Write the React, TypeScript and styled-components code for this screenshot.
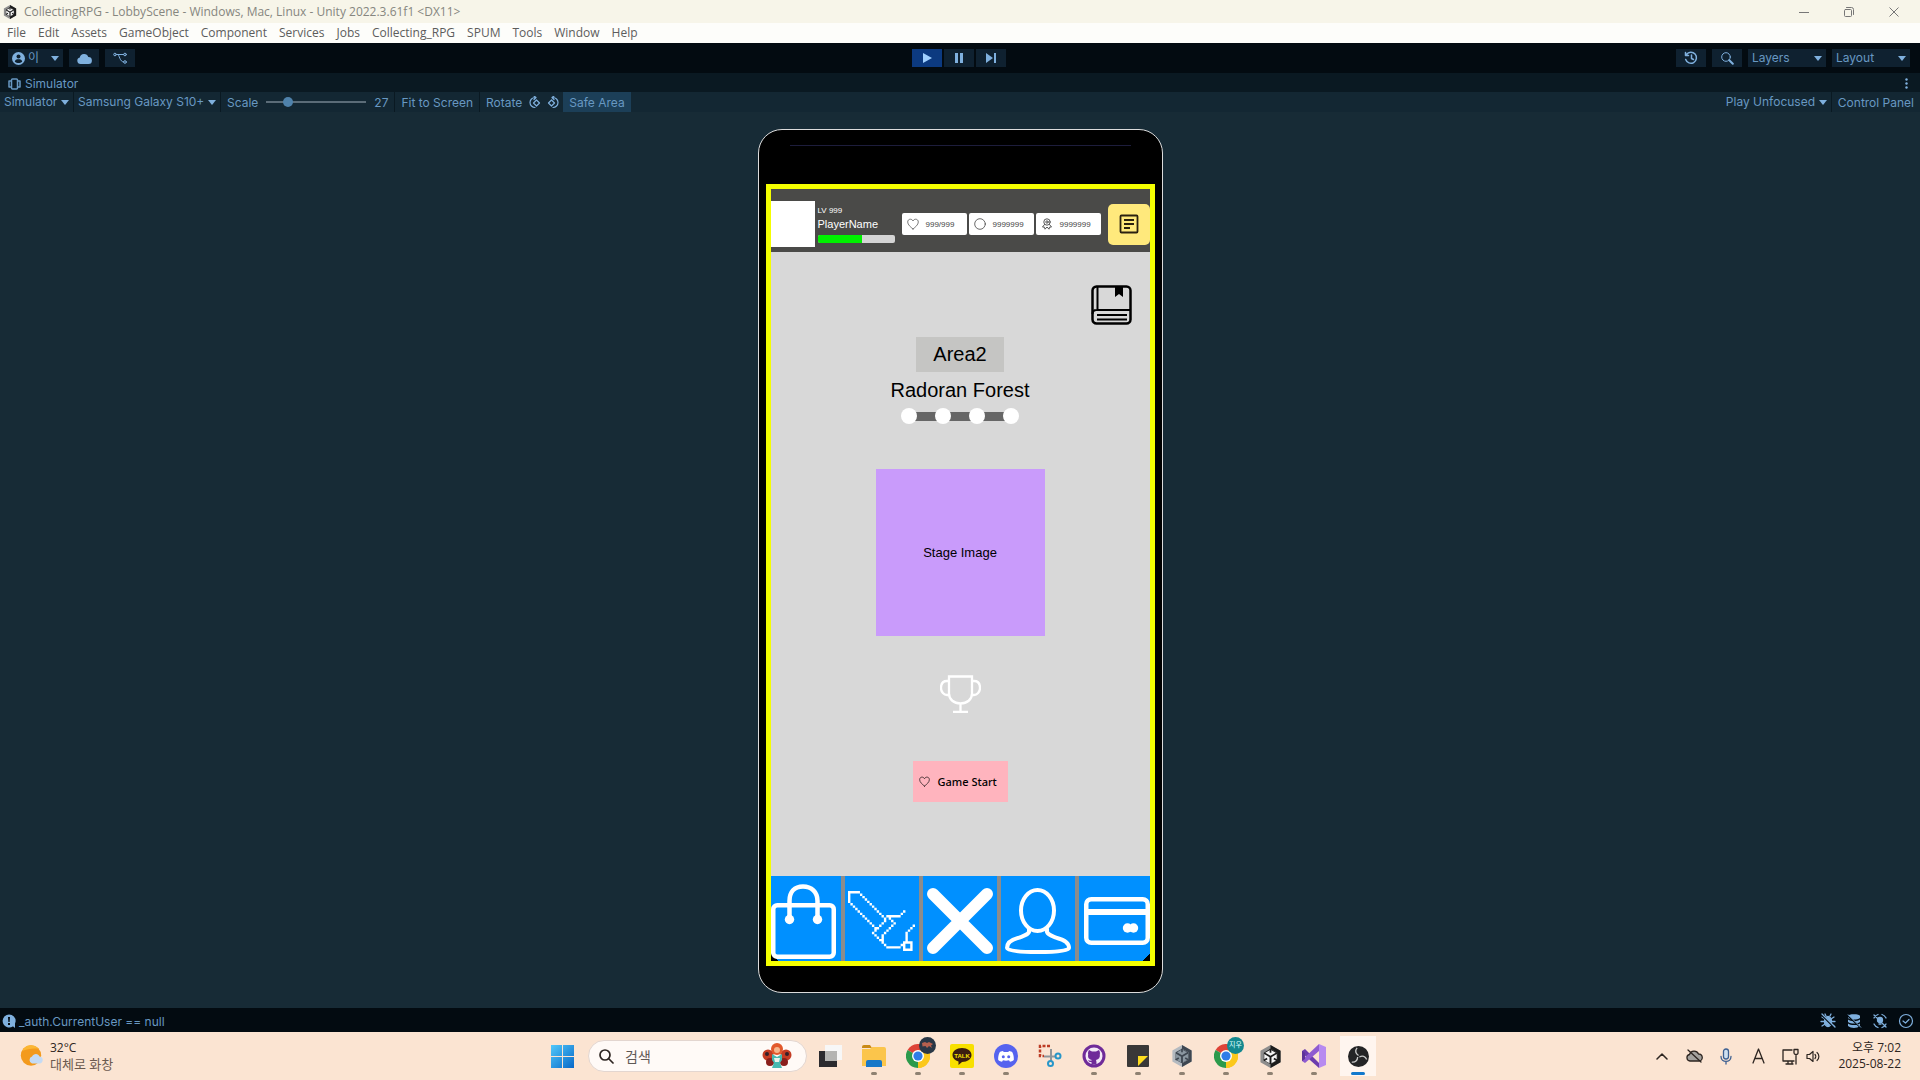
import React from 'react';
import styled, { createGlobalStyle } from 'styled-components';

const editorFont = `Inter, "Noto Sans CJK KR", sans-serif`;
const systemFont = `"Open Sans", "Noto Sans CJK KR", sans-serif`;
const gameFont = `"Liberation Sans", Arial, sans-serif`;

const c = {
  text: '#6898c2',
  icon: '#7fb0de',
  bar: '#030b11',
  tab: '#0a1922',
  tool: '#132733',
  canvas: '#172b36',
  control: '#0f2130',
};

const GlobalStyle = createGlobalStyle`
  * { box-sizing: border-box; }
  body { margin: 0; background: ${c.canvas}; }
  button, select, input { font: inherit; color: inherit; margin: 0; }
  button { border: 0; padding: 0; background: none; }
  svg { display: block; flex: none; }
`;

const Desktop = styled.div`
  min-height: 100vh;
  display: flex;
  flex-direction: column;
  font-family: ${editorFont};
  font-size: 12px;
  color: ${c.text};
`;

/* ---------- window chrome ---------- */
const TitleBar = styled.header`
  height: 23px;
  display: flex;
  align-items: center;
  padding: 0 16px 0 3px;
  gap: 7px;
  background: #f7f5e9;
  color: #86867f;
  font-family: ${systemFont};
`;
const WindowTitle = styled.h1`
  flex: 1;
  margin: 0;
  font-size: 12px;
  line-height: 20px;
  font-weight: 400;
`;
const WindowButtons = styled.div`
  display: flex;
  gap: 25px;
`;
const WindowButton = styled.button`
  width: 20px;
  height: 20px;
  display: grid;
  place-items: center;
`;
const MenuBar = styled.nav`
  height: 20px;
  display: flex;
  align-items: center;
  gap: 12px;
  padding: 0 7px;
  background: #fdfdfa;
  color: #5c5c5c;
  font-family: ${systemFont};
`;
const MenuItem = styled.button`
  font-size: 12px;
  line-height: 18px;
`;

/* ---------- editor toolbars ---------- */
const Toolbar = styled.div`
  height: 30px;
  display: grid;
  grid-template-columns: 1fr auto 1fr;
  align-items: center;
  padding: 0 10px 0 8px;
  background: ${c.bar};
`;
const ToolGroup = styled.div<{ $gap?: number; $end?: boolean }>`
  display: flex;
  align-items: center;
  gap: ${(p) => p.$gap ?? 6}px;
  justify-content: ${(p) => (p.$end ? 'flex-end' : 'flex-start')};
`;
const ToolButton = styled.button<{ $active?: boolean }>`
  width: 30px;
  height: 18px;
  display: grid;
  place-items: center;
  background: ${(p) => (p.$active ? '#0c3a80' : c.control)};
  color: ${c.icon};
`;
const SelectBox = styled.label<{ $width?: number; $bare?: boolean }>`
  height: ${(p) => (p.$bare ? 20 : 18)}px;
  width: ${(p) => (p.$width ? `${p.$width}px` : 'auto')};
  display: flex;
  align-items: center;
  gap: 3px;
  padding: 0 4px;
  background: ${(p) => (p.$bare ? 'transparent' : c.control)};
  border-right: ${(p) => (p.$bare ? `1px solid ${c.tab}` : '0')};
`;
const Select = styled.select`
  flex: 1;
  min-width: 0;
  appearance: none;
  border: 0;
  padding: 0;
  background: transparent;
  font-size: 12px;
  line-height: 18px;
`;
const TabStrip = styled.div`
  height: 19px;
  display: flex;
  align-items: center;
  justify-content: space-between;
  padding: 2px 12px 0 8px;
  background: ${c.tab};
`;
const Tab = styled.button`
  display: flex;
  align-items: center;
  gap: 4px;
  line-height: 16px;
`;
const SimulatorBar = styled.div`
  height: 20px;
  display: flex;
  align-items: center;
  justify-content: space-between;
  background: ${c.tool};
`;
const Segment = styled.div<{ $gap?: number; $last?: boolean }>`
  height: 20px;
  display: flex;
  align-items: center;
  gap: ${(p) => p.$gap ?? 6}px;
  padding: 0 ${(p) => (p.$last ? 3 : 6)}px 0 6px;
  border-right: ${(p) => (p.$last ? '0' : `1px solid ${c.tab}`)};
`;
const FlatButton = styled.button<{ $on?: boolean }>`
  height: 20px;
  padding: 0 6px;
  background: ${(p) => (p.$on ? '#1c3f58' : 'transparent')};
`;
const IconButton = styled.button`
  color: ${c.icon};
`;
const ScaleSlider = styled.input`
  appearance: none;
  width: 100px;
  height: 12px;
  background: linear-gradient(#5b6c78, #5b6c78) center / 100% 2px no-repeat;
  &::-webkit-slider-thumb {
    appearance: none;
    width: 10px;
    height: 10px;
    border-radius: 50%;
    background: #4f82ab;
  }
`;

/* ---------- simulated phone ---------- */
const Canvas = styled.main`
  flex: 1;
  display: flex;
  justify-content: center;
  padding: 17px 0 15px;
  background: ${c.canvas};
`;
const Phone = styled.section`
  width: 405px;
  display: flex;
  flex-direction: column;
  padding: 0 7px 26px;
  border: 1px solid #dcdcdc;
  border-radius: 24px;
  background: #000;
`;
const Bezel = styled.div`
  height: 54px;
  padding: 15px 24px;
  &::before {
    content: '';
    display: block;
    height: 1px;
    background: #1d1d3c;
  }
`;
const Screen = styled.div`
  flex: 1;
  display: flex;
  flex-direction: column;
  border: 5px solid #f5ff00;
  background: #d8d8d8;
  color: #000;
  font-family: ${gameFont};
`;
const Hud = styled.div`
  height: 63px;
  display: flex;
  align-items: center;
  padding-top: 7px;
  background: #4a4a48;
  color: #fff;
`;
const Avatar = styled.div`
  width: 44px;
  height: 46px;
  background: #fff;
`;
const PlayerInfo = styled.div`
  width: 77px;
  margin: 0 7px 0 3px;
`;
const Level = styled.div`
  font-size: 8px;
  line-height: 11px;
`;
const PlayerName = styled.div`
  font-size: 11px;
  line-height: 16px;
  margin-bottom: 3px;
`;
const XpBar = styled.div`
  height: 8px;
  border-radius: 2px;
  background: #d4d4d4;
  overflow: hidden;
`;
const XpFill = styled.div`
  height: 100%;
  background: #00f000;
`;
const Chips = styled.div`
  flex: 1;
  display: flex;
  gap: 2px;
`;
const Chip = styled.div`
  flex: 1;
  height: 22px;
  display: flex;
  align-items: center;
  gap: 7px;
  padding-left: 5px;
  border-radius: 2px;
  background: #fff;
  color: #444;
  font-size: 8px;
`;
const NoteButton = styled.button`
  width: 42px;
  height: 41px;
  margin-left: 7px;
  display: grid;
  place-items: center;
  border-radius: 5px;
  background: #ffe97c;
`;
const Lobby = styled.div`
  flex: 1;
  display: flex;
  flex-direction: column;
  align-items: center;
`;
const BookButton = styled.button`
  align-self: flex-end;
  margin: 33px 18px 12px 0;
`;
const AreaTag = styled.div`
  padding: 0 17px;
  background: #c5c5c3;
  font-size: 20px;
  line-height: 35px;
`;
const AreaName = styled.h2`
  margin: 5px 0;
  font-size: 20px;
  line-height: 26px;
  font-weight: 400;
`;
const Progress = styled.ol`
  display: flex;
  gap: 18px;
  margin: 0;
  padding: 0;
  list-style: none;
  background: linear-gradient(#666, #666) center / 90% 9px no-repeat;
`;
const Step = styled.li`
  width: 16px;
  height: 16px;
  border-radius: 50%;
  background: #fff;
`;
const StageImage = styled.div`
  width: 169px;
  height: 167px;
  margin: 45px 0 39px;
  display: grid;
  place-items: center;
  background: #c99bfb;
  font-size: 13px;
`;
const StartButton = styled.button`
  width: 95px;
  height: 41px;
  margin-top: 48px;
  display: flex;
  align-items: center;
  gap: 8px;
  padding-left: 6px;
  background: #ffb4be;
  font-family: "Noto Sans", sans-serif;
  font-size: 11px;
  font-weight: 500;
`;
const GameNav = styled.nav`
  height: 85px;
  display: grid;
  grid-template-columns: 70fr 74fr 74fr 74fr 70fr;
  gap: 4px;
  background: #8c8c8c;
`;
const cornerCut = (side: 'left' | 'right') =>
  `linear-gradient(to top ${side === 'left' ? 'right' : 'left'}, #000 50%, transparent 51%) bottom ${side} / 7px 7px no-repeat,`;
const NavButton = styled.button<{ $corner?: 'left' | 'right' }>`
  display: flex;
  align-items: center;
  justify-content: ${(p) =>
    p.$corner ? (p.$corner === 'left' ? 'flex-start' : 'flex-end') : 'center'};
  padding-top: 5px;
  color: #fff;
  background: ${(p) => (p.$corner ? cornerCut(p.$corner) : '')} #0090ff;
`;

/* ---------- status bar ---------- */
const StatusBar = styled.footer`
  height: 24px;
  display: flex;
  align-items: center;
  justify-content: space-between;
  padding: 2px 6px 0 2px;
  background: ${c.bar};
`;

/* ---------- taskbar ---------- */
const Taskbar = styled.div`
  height: 48px;
  display: grid;
  grid-template-columns: 1fr auto 1fr;
  align-items: center;
  background: #fbe4d2;
  color: #2d2521;
  font-family: ${systemFont};
`;
const Weather = styled.button`
  justify-self: start;
  margin-left: 20px;
  display: flex;
  align-items: center;
  gap: 6px;
  text-align: left;
`;
const TwoLines = styled.span<{ $end?: boolean }>`
  display: flex;
  flex-direction: column;
  align-items: ${(p) => (p.$end ? 'flex-end' : 'flex-start')};
  font-size: 12px;
  line-height: 16px;
`;
const Muted = styled.span`
  font-size: 13px;
  color: #6b5a4f;
`;
const Dock = styled.div`
  display: flex;
  align-items: center;
`;
const DockButton = styled.button<{ $state?: 'open' | 'active' }>`
  width: 44px;
  height: 40px;
  display: grid;
  place-items: center;
  position: relative;
  border-radius: 4px;
  background: ${(p) =>
    p.$state === 'active'
      ? 'linear-gradient(#fff5ef, #fff5ef) center / 36px 100% no-repeat'
      : 'none'};
  &::after {
    content: '';
    display: ${(p) => (p.$state ? 'block' : 'none')};
    position: absolute;
    bottom: 1px;
    width: ${(p) => (p.$state === 'active' ? 14 : 6)}px;
    height: 3px;
    border-radius: 2px;
    background: ${(p) => (p.$state === 'active' ? '#1278cc' : '#8e8172')};
  }
`;
const Badge = styled.span<{ $color: string }>`
  position: absolute;
  top: 1px;
  right: 4px;
  width: 17px;
  height: 17px;
  border-radius: 50%;
  background: ${(p) => p.$color};
  color: #dff;
  font-size: 7px;
  line-height: 16px;
  text-align: center;
`;
const SearchBox = styled.label`
  width: 219px;
  height: 32px;
  margin: 0 1px 0 4px;
  padding: 0 14px 0 10px;
  display: flex;
  align-items: center;
  gap: 11px;
  border: 1px solid #e3d6d0;
  border-radius: 16px;
  background: #fffaf7;
`;
const SearchInput = styled.input`
  flex: 1;
  min-width: 0;
  border: 0;
  padding: 0;
  background: transparent;
  font-size: 14px;
  &::placeholder { color: #5f5955; opacity: 1; }
`;
const Tray = styled.div`
  justify-self: end;
  display: flex;
  align-items: center;
  padding-right: 19px;
`;
const TrayButton = styled.button<{ $width?: number }>`
  width: ${(p) => p.$width ?? 32}px;
  height: 40px;
  display: grid;
  place-items: center;
`;
const Clock = styled.button`
  margin-left: 17px;
`;

/* ---------- drawings ---------- */
const line = { fill: 'none', stroke: 'currentColor', strokeLinecap: 'round', strokeLinejoin: 'round' } as const;

const Caret = () => (
  <svg width="8" height="5" viewBox="0 0 8 5"><path d="M0 0h8L4 5z" fill={c.icon} /></svg>
);
const UnityMark = ({ size = 16, dark = '#1c1c1c', mid = '#8d8d8d', light = '#f4f4f4' }) => (
  <svg width={size} height={size} viewBox="0 0 24 24">
    <path d="M12 0 22.500 6v12L12 24 1.500 18V6z" fill={mid} />
    <path d="M12 0 22.500 6v12L12 24v-4l7-4V8l-7-4z" fill={dark} />
    <path d="M12 4l7 4v8l-7 4-7-4V8z" fill={dark} />
    <path d="M12 5l5.500 3-5.500 3.200L6.500 8zM5.500 9.500l5.500 3.200v6.300l-5.500-3.200zM18.500 9.500L13 12.700V19l5.500-3.200z" fill={light} />
    <path d="M12 4v4M5 16.200l3.500-2M19 16.200l-3.500-2" stroke={dark} strokeWidth="1.800" />
  </svg>
);
const Heart = ({ size = 12 }) => (
  <svg width={size} height={size} viewBox="0 0 12 12">
    <path d="M6 11C3.500 9 .7 6.700.7 4 .7 2.200 2 1.200 3.300 1.200 4.600 1.200 5.500 2 6 3c.5-1 1.400-1.800 2.700-1.800 1.300 0 2.600 1 2.600 2.800C11.300 6.700 8.500 9 6 11z" {...line} strokeWidth="0.700" />
  </svg>
);
const Chrome = () => (
  <svg width="24" height="24" viewBox="0 0 24 24">
    <path d="M12 12 1.600 6A12 12 0 0 1 22.400 6z" fill="#de4337" />
    <path d="M12 12 22.400 6A12 12 0 0 1 12 24z" fill="#fbc81c" />
    <path d="M12 12v12A12 12 0 0 1 1.600 6z" fill="#2c9a4b" />
    <path d="M12 6.500h10.700A12 12 0 0 1 12 24l4.800-9z" fill="#fbc81c" />
    <circle cx="12" cy="12" r="6" fill="#fff" />
    <circle cx="12" cy="12" r="4.600" fill="#2f7de8" />
  </svg>
);

/* Pixel-art sword: each stroke runs from one grid cell to another, one cell per step. */
const swordStrokes = [
  [0, 0, 4, 0], [0, 0, 0, 4], [5, 1, 15, 11], [1, 5, 11, 15],
  [16, 10, 21, 10], [22, 9, 23, 8],
  [15, 12, 10, 17], [17, 11, 19, 13], [18, 14, 14, 18],
  [11, 18, 14, 21], [14, 18, 14, 21], [15, 22, 16, 23], [16, 23, 21, 23], [22, 22, 23, 21],
  [24, 17, 24, 21], [25, 16, 27, 14],
  [23, 21, 26, 21], [26, 21, 26, 24], [23, 24, 26, 24], [23, 21, 23, 24],
];
const swordCells = swordStrokes.flatMap(([x1, y1, x2, y2]) => {
  const steps = Math.max(Math.abs(x2 - x1), Math.abs(y2 - y1));
  return Array.from({ length: steps + 1 }, (_, i) => [
    x1 + Math.sign(x2 - x1) * i,
    y1 + Math.sign(y2 - y1) * i,
  ]);
});
const Sword = () => (
  <svg width="67" height="60" viewBox="0 0 28 25">
    <path d={swordCells.map(([x, y]) => `M${x} ${y}h1v1h-1z`).join('')} fill="currentColor" />
  </svg>
);

const App: React.FC = () => (
  <Desktop>
    <GlobalStyle />
    <TitleBar>
      <UnityMark size={14} />
      <WindowTitle>CollectingRPG - LobbyScene - Windows, Mac, Linux - Unity 2022.3.61f1 &lt;DX11&gt;</WindowTitle>
      <WindowButtons>
        <WindowButton aria-label="Minimize"><svg width="10" height="10"><path d="M0 5.500h10" stroke="#777" /></svg></WindowButton>
        <WindowButton aria-label="Restore">
          <svg width="10" height="10" {...line} stroke="#777"><rect x=".5" y="2.500" width="7" height="7" rx="1" /><path d="M2.500.5h5a2 2 0 0 1 2 2v5" /></svg>
        </WindowButton>
        <WindowButton aria-label="Close"><svg width="10" height="10"><path d="M.5.500l9 9m0-9l-9 9" stroke="#777" /></svg></WindowButton>
      </WindowButtons>
    </TitleBar>
    <MenuBar>
      {['File', 'Edit', 'Assets', 'GameObject', 'Component', 'Services', 'Jobs', 'Collecting_RPG', 'SPUM', 'Tools', 'Window', 'Help'].map((m) => (
        <MenuItem key={m}>{m}</MenuItem>
      ))}
    </MenuBar>

    <Toolbar>
      <ToolGroup>
        <SelectBox $width={55}>
          <svg width="13" height="13" viewBox="0 0 13 13">
            <circle cx="6.500" cy="6.500" r="6.500" fill={c.icon} />
            <circle cx="6.500" cy="4.500" r="2" fill={c.control} />
            <path d="M2.800 9.800c.3-2 1.600-2.600 3.700-2.600s3.400.6 3.700 2.600c-2 1.600-5.400 1.600-7.400 0z" fill={c.control} />
          </svg>
          <Select aria-label="Account"><option>이</option></Select>
          <Caret />
        </SelectBox>
        <ToolButton aria-label="Cloud">
          <svg width="15" height="11" viewBox="0 0 15 11"><path d="M3.500 11a3.300 3.300 0 0 1-.7-6.500 4.400 4.400 0 0 1 8.500-.5A3.500 3.500 0 0 1 11.500 11z" fill="currentColor" /></svg>
        </ToolButton>
        <ToolButton aria-label="Version control">
          <svg width="14" height="12" viewBox="0 0 14 12" {...line}><circle cx="2" cy="2.500" r="1.300" /><circle cx="12" cy="2.500" r="1.300" /><circle cx="12" cy="10" r="1.300" /><path d="M3.300 2.500h7.400M5 2.500c1.500 0 1.500 7.500 5.700 7.500" /></svg>
        </ToolButton>
      </ToolGroup>
      <ToolGroup $gap={2}>
        <ToolButton $active aria-label="Play"><svg width="9" height="10"><path d="M0 0l9 5-9 5z" fill="#9fd0ff" /></svg></ToolButton>
        <ToolButton aria-label="Pause"><svg width="8" height="10"><path d="M0 0h3v10H0zM5 0h3v10H5z" fill="currentColor" /></svg></ToolButton>
        <ToolButton aria-label="Step"><svg width="10" height="10"><path d="M0 0l7 5-7 5zM8 0h2v10H8z" fill="currentColor" /></svg></ToolButton>
      </ToolGroup>
      <ToolGroup $end>
        <ToolButton aria-label="Undo history">
          <svg width="14" height="14" viewBox="0 0 14 14" {...line} strokeWidth="1.500"><path d="M2.500 3.500a5.500 5.500 0 1 1-.8 5M1.500 1.500v3h3M7.500 4v3.500l2 1" /></svg>
        </ToolButton>
        <ToolButton aria-label="Search">
          <svg width="13" height="13" viewBox="0 0 13 13" {...line}><circle cx="5" cy="5" r="4.300" /><path d="M8.300 8.300l3.500 3.500" strokeWidth="2" /></svg>
        </ToolButton>
        <SelectBox $width={78}><Select aria-label="Layers"><option>Layers</option></Select><Caret /></SelectBox>
        <SelectBox $width={78}><Select aria-label="Layout"><option>Layout</option></Select><Caret /></SelectBox>
      </ToolGroup>
    </Toolbar>

    <TabStrip>
      <Tab>
        <svg width="13" height="12" viewBox="0 0 13 12" {...line} strokeWidth="1.500"><rect x="3.500" y="1" width="6" height="10" rx="1" /><path d="M3 3H1v6h2M10 3h2v6h-2" /></svg>
        Simulator
      </Tab>
      <IconButton aria-label="More"><svg width="3" height="11" fill="currentColor"><circle cx="1.500" cy="1.500" r="1.200" /><circle cx="1.500" cy="5.500" r="1.200" /><circle cx="1.500" cy="9.500" r="1.200" /></svg></IconButton>
    </TabStrip>

    <SimulatorBar>
      <ToolGroup $gap={0}>
        <SelectBox $bare><Select aria-label="View"><option>Simulator</option></Select><Caret /></SelectBox>
        <SelectBox $bare><Select aria-label="Device"><option>Samsung Galaxy S10+</option></Select><Caret /></SelectBox>
        <Segment $gap={8}>
          <label htmlFor="scale">Scale</label>
          <ScaleSlider id="scale" type="range" min="10" max="100" defaultValue="27" />
          <output htmlFor="scale">27</output>
        </Segment>
        <Segment><button>Fit to Screen</button></Segment>
        <Segment $last>
          <span>Rotate</span>
          <IconButton aria-label="Rotate clockwise">
            <svg width="13" height="13" viewBox="0 0 13 13" {...line} strokeWidth="1.200"><path d="M7 1.500a5 5 0 1 0 0 10M6 0l2 1.500L6 3.500M8.500 4l3 3-3 3-3-3z" /></svg>
          </IconButton>
          <IconButton aria-label="Rotate counter-clockwise">
            <svg width="13" height="13" viewBox="0 0 13 13" {...line} strokeWidth="1.200"><path d="M6 1.500a5 5 0 1 1 0 10M7 0L5 1.500l2 2M4.500 4l-3 3 3 3 3-3z" /></svg>
          </IconButton>
        </Segment>
        <FlatButton $on>Safe Area</FlatButton>
      </ToolGroup>
      <ToolGroup $gap={0}>
        <SelectBox $bare><Select aria-label="Play mode"><option>Play Unfocused</option></Select><Caret /></SelectBox>
        <FlatButton>Control Panel</FlatButton>
      </ToolGroup>
    </SimulatorBar>

    <Canvas>
      <Phone>
        <Bezel />
        <Screen>
          <Hud>
            <Avatar />
            <PlayerInfo>
              <Level>LV 999</Level>
              <PlayerName>PlayerName</PlayerName>
              <XpBar><XpFill style={{ width: `${(44 / 77) * 100}%` }} /></XpBar>
            </PlayerInfo>
            <Chips>
              <Chip><Heart />999/999</Chip>
              <Chip><svg width="12" height="12"><circle cx="6" cy="6" r="5.300" {...line} strokeWidth=".8" /></svg>9999999</Chip>
              <Chip>
                <svg width="12" height="12" viewBox="0 0 12 12" {...line} strokeWidth=".9"><circle cx="6" cy="4" r="3.200" /><circle cx="6" cy="4" r="1.200" /><path d="M3.500 6.500L1.500 9l2 .2.500 2L6 9l2 2.200.5-2 2-.2-2-2.500" /></svg>
                9999999
              </Chip>
            </Chips>
            <NoteButton aria-label="Notices">
              <svg width="20" height="20" viewBox="0 0 20 20" fill="none" stroke="#2a2010" strokeWidth="1.800"><rect x="1.500" y="1.500" width="17" height="17" rx="1" /><path d="M5 6h10M5 10h10M5 14h6" /></svg>
            </NoteButton>
          </Hud>
          <Lobby>
            <BookButton aria-label="Collection book">
              <svg width="41" height="40" viewBox="0 0 41 40" fill="none" stroke="#000" strokeWidth="2.500"><rect x="1.500" y="1.500" width="38" height="37" rx="4" /><path d="M1.500 29c0-3 1.500-4 4-4h34M6.500 1v24" strokeWidth="2" /><path d="M6 30h30M6 34.500h30" strokeWidth="2" /><path d="M24 1h8v11l-4-3-4 3z" fill="#000" stroke="none" /></svg>
            </BookButton>
            <AreaTag>Area2</AreaTag>
            <AreaName>Radoran Forest</AreaName>
            <Progress><Step /><Step /><Step /><Step /></Progress>
            <StageImage>Stage Image</StageImage>
            <svg width="41" height="38" viewBox="0 0 41 38" fill="none" stroke="#fff" strokeWidth="2.300"><path d="M9 1.500h23v17c0 6-5 10-11.500 10S9 24.500 9 18.500zM9 6H7c-4 0-6 3-6 7s3 7 6 7h3M32 6h2c4 0 6 3 6 7s-3 7-6 7h-3M20.500 28v9M13 37h15" /></svg>
            <StartButton><Heart size={11} />Game Start</StartButton>
          </Lobby>
          <GameNav>
            <NavButton $corner="left" aria-label="Shop">
              <svg width="66" height="75" viewBox="0 0 66 75" fill="none" stroke="currentColor" strokeWidth="4.500"><rect x="2.250" y="21.250" width="60.500" height="51.500" rx="4" /><path d="M18.500 35V17c0-9 5-14.500 13.500-14.500S46.500 8 46.500 17v18" /><circle cx="18.500" cy="35.500" r="4.700" fill="currentColor" stroke="none" /><circle cx="46.500" cy="35.500" r="4.700" fill="currentColor" stroke="none" /></svg>
            </NavButton>
            <NavButton aria-label="Equipment"><Sword /></NavButton>
            <NavButton aria-label="Battle">
              <svg width="66" height="66" viewBox="0 0 66 66"><path d="M6 6l54 54M60 6L6 60" stroke="currentColor" strokeWidth="12" strokeLinecap="round" /></svg>
            </NavButton>
            <NavButton aria-label="Character">
              <svg width="66" height="66" viewBox="0 0 66 66" {...line} strokeWidth="4"><ellipse cx="32.500" cy="22.500" rx="16.500" ry="20.500" /><path d="M24 41v3c-1 3-6 4-11 6C5 52 2 55 2 60c0 3 14 4 30.500 4S64 63 64 60c0-5-4-8-12-10-5-2-9-3-10-6v-3" /></svg>
            </NavButton>
            <NavButton $corner="right" aria-label="Card">
              <svg width="66" height="48" viewBox="0 0 66 48" fill="none" stroke="currentColor" strokeWidth="4.500"><rect x="2.250" y="2.250" width="61.500" height="43.500" rx="5" /><path d="M2 15h62" strokeWidth="6" /><circle cx="43.500" cy="31" r="4.700" fill="currentColor" stroke="none" /><circle cx="49.500" cy="31" r="4.700" fill="currentColor" stroke="none" /></svg>
            </NavButton>
          </GameNav>
        </Screen>
      </Phone>
    </Canvas>

    <StatusBar>
      <ToolGroup $gap={3}>
        <svg width="14" height="14" viewBox="0 0 14 14"><path d="M7 .5a6.500 6.500 0 1 1-1 12.900A6.500 6.500 0 0 1 7 .5zM7 9h6v5z" fill={c.icon} /><path d="M6 3h2l-.4 5H6.400zM6 9h2v2H6z" fill={c.bar} /></svg>
        <span>_auth.CurrentUser == null</span>
      </ToolGroup>
      <ToolGroup $gap={10}>
        <IconButton aria-label="Debugger"><svg width="16" height="16" viewBox="0 0 16 16" {...line} strokeWidth="1.300"><ellipse cx="8" cy="8.500" rx="3.500" ry="5" fill="currentColor" /><path d="M2 4l3 2M1 8.500h3M2 13l3-2M14 4l-3 2M15 8.500h-3M14 13l-3-2M6 3L5 1M10 3l1-2" /><path d="M1 1l14 14" stroke={c.bar} strokeWidth="2" /><path d="M2 1l13 13" /></svg></IconButton>
        <IconButton aria-label="Cache server"><svg width="16" height="16" viewBox="0 0 16 16"><path d="M2 3c0-2.500 12-2.500 12 0v2c-3 2-9 2-12 0zM2 6.500c3 2 9 2 12 0V9c-3 2-9 2-12 0zM2 10.500c3 2 9 2 12 0V13c-3 2.500-9 2.500-12 0z" fill="currentColor" /><path d="M1 2l14 13" stroke={c.bar} strokeWidth="1.500" /><path d="M2 1.500l13 13" stroke="currentColor" /></svg></IconButton>
        <IconButton aria-label="Auto lighting"><svg width="16" height="16" viewBox="0 0 16 16" {...line} strokeWidth="1.300"><path d="M2 5a7 7 0 0 1 4-3.500M14 5a7 7 0 0 0-4-3.500M2 11a7 7 0 0 0 4 3.500M14 11a7 7 0 0 1-4 3.500M2 2l12 12" /><circle cx="8" cy="7" r="2.500" fill="currentColor" /><path d="M7 11h2" /></svg></IconButton>
        <IconButton aria-label="Progress"><svg width="16" height="16" viewBox="0 0 16 16" {...line} strokeWidth="1.200"><circle cx="8" cy="8" r="6.500" /><path d="M5 8l2.500 2L11 6.500" /></svg></IconButton>
      </ToolGroup>
    </StatusBar>

    <Taskbar>
      <Weather>
        <svg width="24" height="22" viewBox="0 0 24 22"><circle cx="11" cy="10.500" r="10.200" fill="#f39a1d" /><path d="M2 6a10 10 0 0 1 17-2C14 3 7 4 2 6z" fill="#fbb634" /><path d="M12 18.500a3.700 3.700 0 0 1 0-7c1.500-3.500 6.500-3.500 7.500 0 4 0 4.500 6 .5 7z" fill="#c4dbf5" /></svg>
        <TwoLines><span>32°C</span><Muted>대체로 화창</Muted></TwoLines>
      </Weather>
      <Dock>
        <DockButton aria-label="Start">
          <svg width="23" height="23"><defs><linearGradient id="win" x1="0" y1="0" x2="23" y2="23" gradientUnits="userSpaceOnUse"><stop stopColor="#52c8fa" /><stop offset="1" stopColor="#0768c8" /></linearGradient></defs><path d="M0 0h11v11H0zM12 0h11v11H12zM0 12h11v11H0zM12 12h11v11H12z" fill="url(#win)" /></svg>
        </DockButton>
        <SearchBox>
          <svg width="15" height="15" viewBox="0 0 15 15" {...line} strokeWidth="1.700"><circle cx="6" cy="6" r="5" /><path d="M10 10l4 4" /></svg>
          <SearchInput type="search" aria-label="검색" placeholder="검색" />
          <svg width="30" height="26" viewBox="0 0 30 26">
            <circle cx="6" cy="12" r="5.500" fill="#c43c24" /><circle cx="24" cy="12" r="5.500" fill="#c43c24" /><circle cx="8" cy="19" r="4" fill="#8a1f1c" /><circle cx="22" cy="19" r="4" fill="#8a1f1c" /><circle cx="5" cy="11" r="2" fill="#33202a" /><circle cx="25" cy="11" r="2" fill="#33202a" />
            <circle cx="15" cy="6" r="6" fill="#e2592c" /><circle cx="15" cy="7" r="3" fill="#f7b58c" /><path d="M10 11l5 3 5-3v6l-2 3 2 5H10l2-5-2-3z" fill="#48b9b0" /><path d="M12 15h6l-1 4h-4z" fill="#eaf4ec" />
          </svg>
        </SearchBox>
        <DockButton aria-label="Task view"><svg width="24" height="22" viewBox="0 0 24 22"><path d="M7 0h17v15H7z" fill="#f7f7f7" /><path d="M1 6h18v16H1z" fill="#2b2a2e" /><path d="M7 6h12v10H7z" fill="#b4b4b2" /></svg></DockButton>
        <DockButton $state="open" aria-label="File Explorer"><svg width="24" height="22" viewBox="0 0 24 22"><path d="M0 2a2 2 0 0 1 2-2h6l2 3H0z" fill="#c98a17" /><path d="M0 4h8l2-2h12a2 2 0 0 1 2 2v17H0z" fill="#fbc54b" /><path d="M4 22v-5a2 2 0 0 1 2-2h12a2 2 0 0 1 2 2v5z" fill="#1878c8" /></svg></DockButton>
        <DockButton $state="open" aria-label="Chrome"><Chrome /><Badge $color="#293746"><svg width="17" height="17" viewBox="0 0 17 17"><path d="M3 6l3-1 2 1 2-1 4 2-2 1.500 1 2.500-3-2-2 2-1.500-2-3 .5z" fill="#b5604e" /></svg></Badge></DockButton>
        <DockButton $state="open" aria-label="KakaoTalk"><svg width="24" height="24" viewBox="0 0 24 24"><rect width="24" height="24" rx="2" fill="#f8e000" /><path d="M12 4c5.500 0 9.500 3 9.500 7s-4 7-9.500 7l-3.500 3v-3.500C5 16.500 2.500 14 2.500 11c0-4 4-7 9.500-7z" fill="#3b1d10" /><text x="12" y="13.500" fill="#f8e000" fontFamily="Liberation Sans" fontWeight="700" fontSize="6" textAnchor="middle">TALK</text></svg></DockButton>
        <DockButton $state="open" aria-label="Discord"><svg width="24" height="24" viewBox="0 0 24 24"><circle cx="12" cy="12" r="12" fill="#5663ef" /><path d="M9 7c-1.500.2-2.700.7-3.300 1.200C4.500 10.500 4 13 4.200 16c1.300 1 2.700 1.500 3.800 1.700l1-1.500c2 .6 4 .6 6 0l1 1.500c1.100-.2 2.500-.7 3.800-1.700.2-3-.3-5.500-1.500-7.800C17.700 7.700 16.500 7.200 15 7l-.7 1h-4.600z" fill="#fff" /><circle cx="9.300" cy="12.800" r="1.500" fill="#5663ef" /><circle cx="14.700" cy="12.800" r="1.500" fill="#5663ef" /></svg></DockButton>
        <DockButton aria-label="Snipping Tool"><svg width="24" height="24" viewBox="0 0 24 24" fill="none"><path d="M12 2H2v10h4" stroke="#bd3c25" strokeWidth="2.500" strokeDasharray="3 1.500" /><path d="M13 5v12M6 12.500h12" stroke="#8f969b" strokeWidth="2" /><circle cx="12.500" cy="19.500" r="2.500" stroke="#2796c9" strokeWidth="2" /><circle cx="20" cy="12" r="2.500" stroke="#2796c9" strokeWidth="2" /></svg></DockButton>
        <DockButton $state="open" aria-label="GitHub Desktop"><svg width="24" height="24" viewBox="0 0 24 24"><circle cx="12" cy="12" r="11.500" fill="#6f2b99" /><circle cx="12" cy="12" r="8.500" fill="#f3e9f7" /><path d="M7 6l3 1.500h4L17 6c1 2 1.200 3 .8 4.500.5 3-1 5-3.800 5.500.5 1 .5 3 .5 4.500h-5V18c-2 .3-3-.5-3.500-2 1 .2 1.500 1 3.500.5l.5-.5c-3-.5-4.500-2.500-3.800-5.500C5.800 9 6 8 7 6z" fill="#6f2b99" /></svg></DockButton>
        <DockButton $state="open" aria-label="Sticky Notes"><svg width="22" height="22"><rect width="22" height="22" rx="1" fill="#393838" /><path d="M11 11h10L11 21z" fill="#fddc1f" /></svg></DockButton>
        <DockButton $state="open" aria-label="Unity Hub"><UnityMark size={22} dark="#3e4650" mid="#b4bac0" light="#8b97a1" /></DockButton>
        <DockButton $state="open" aria-label="Chrome profile"><Chrome /><Badge $color="#13888f">지우</Badge></DockButton>
        <DockButton $state="open" aria-label="Unity"><UnityMark size={23} /></DockButton>
        <DockButton $state="open" aria-label="Visual Studio"><svg width="24" height="24" viewBox="0 0 24 24"><path d="M0 7l3-2 14 14v5L0 9z" fill="#6c3cae" /><path d="M17 0v7L3 19l-3-2v-1z" fill="#8e5bd0" /><path d="M0 7v10l3-2V9z" fill="#5d3398" /><path d="M17 0l7 3v18l-7 3z" fill="#b78af0" /></svg></DockButton>
        <DockButton $state="active" aria-label="OBS Studio"><svg width="21" height="21" viewBox="0 0 22 22" fill="none"><circle cx="11" cy="11" r="11" fill="#242426" /><g stroke="#c9c9c9" strokeWidth="1.400"><path d="M11 10c-3-2-4-5-1.500-8" /><path d="M11 10c-3-2-4-5-1.500-8" transform="rotate(120 11 11)" /><path d="M11 10c-3-2-4-5-1.500-8" transform="rotate(240 11 11)" /></g></svg></DockButton>
      </Dock>
      <Tray>
        <TrayButton aria-label="Hidden icons"><svg width="12" height="8" {...line} strokeWidth="1.500"><path d="M1 7l5-5 5 5" /></svg></TrayButton>
        <TrayButton aria-label="OneDrive"><svg width="17" height="14" viewBox="0 0 17 14" {...line} strokeWidth="1.300"><path d="M4 12a3.300 3.300 0 0 1-.5-6.500 4.800 4.800 0 0 1 9-.5A3.500 3.500 0 0 1 13 12z" fill="#a3a19e" /><path d="M2 1l13 12" /></svg></TrayButton>
        <TrayButton aria-label="Microphone"><svg width="12" height="17" viewBox="0 0 12 17" {...line} stroke="#3c5f91" strokeWidth="1.300"><rect x="3.500" y="1" width="5" height="10" rx="2.500" fill="#cfe0f0" /><path d="M1 8.500c0 6.500 10 6.500 10 0M6 13.500V16" /></svg></TrayButton>
        <TrayButton aria-label="Input language"><svg width="13" height="16" viewBox="0 0 13 16" {...line} strokeWidth="1.300"><path d="M1 15L6.500 1 12 15M3 10.500h7" /></svg></TrayButton>
        <TrayButton aria-label="Network"><svg width="17" height="17" viewBox="0 0 17 17" {...line} strokeWidth="1.300"><path d="M10 2H1v11h11M4 16h7M6 13v3M10 13v3M14 7v9M12 1.500h4V5c0 2-4 2-4 0z" /></svg></TrayButton>
        <TrayButton $width={15} aria-label="Volume"><svg width="15" height="13" viewBox="0 0 15 13" {...line} strokeWidth="1.200"><path d="M1 4.500h2.500L7 1.500v10L3.500 8.500H1zM9 4.500c1 1 1 3 0 4M11 2.500c2.500 2 2.500 6 0 8" /></svg></TrayButton>
        <Clock><TwoLines $end><span>오후 7:02</span><span>2025-08-22</span></TwoLines></Clock>
      </Tray>
    </Taskbar>
  </Desktop>
);

export default App;
